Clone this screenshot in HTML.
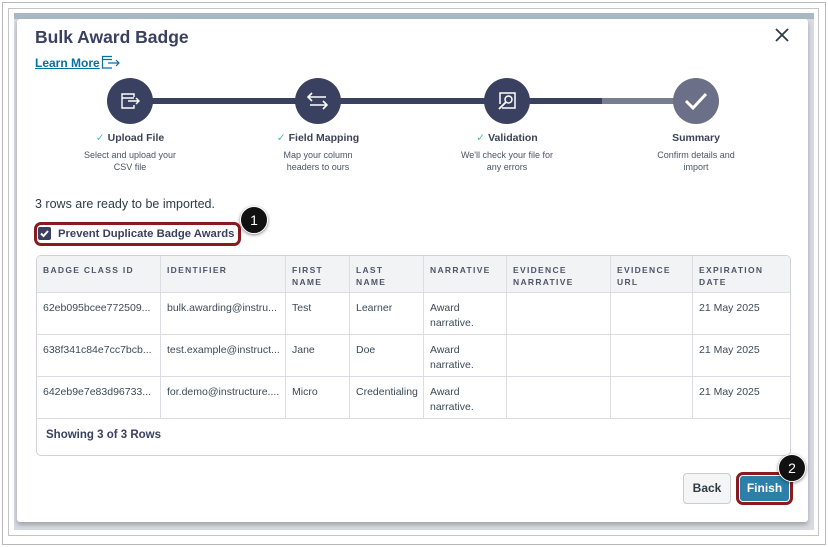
<!DOCTYPE html>
<html><head><style>
*{box-sizing:border-box;margin:0;padding:0}
body{width:828px;height:547px;background:#fff;font-family:"Liberation Sans",sans-serif;position:relative;overflow:hidden;color:#2d3b45}
.abs{position:absolute}
.f1{left:2px;top:2px;width:824px;height:543px;border:1px solid #b8b8b8}
.f2{left:8px;top:8px;width:811px;height:528px;border:1px solid #c4c4c4;background:#fff}
.bg{left:14px;top:13px;width:800px;height:517px;background:#d8dbe0}
.top{left:14px;top:13px;width:800px;height:6px;background:#a8b9c4}
.modal{left:17px;top:19px;width:791px;height:503px;background:#fff;border-radius:3px;box-shadow:0 3px 5px rgba(0,0,0,.25)}
.circ{width:46px;height:46px;border-radius:50%;background:#394060;top:78px}
.lbl{width:160px;text-align:center;font-size:10.5px;font-weight:bold;color:#3b4256;top:132px}
.desc{width:160px;text-align:center;font-size:9px;color:#4a5560;top:149px;line-height:12px}
.chk{color:#4bc0a8;font-weight:normal;margin-right:3px}
table{border-collapse:collapse;font-size:10.5px;color:#3b4a55;table-layout:fixed}
td,th{border:1px solid #dcdde2;vertical-align:top;text-align:left;padding:0 6px;overflow:hidden;white-space:nowrap}
th{background:#f2f3f5;height:37px;font-size:8.5px;letter-spacing:1.3px;color:#4d5666;padding-top:8px;line-height:12px}
td{height:42px;padding-top:8px;line-height:15px}
.badge{width:28px;height:28px;border-radius:50%;background:#111;color:#fff;font-size:14px;text-align:center;line-height:27px;box-shadow:0 1px 3px rgba(0,0,0,.5);border:1px solid #fff}
</style></head><body>
<div class="abs f1"></div>
<div class="abs f2"></div>
<div class="abs bg"></div>
<div class="abs top"></div>
<div class="abs modal"></div>
<div class="abs" style="left:35px;top:27px;font-size:17.5px;font-weight:bold;color:#394060">Bulk Award Badge</div>
<svg class="abs" style="left:774px;top:27px" width="16" height="16"><path d="M2 2L14 14M14 2L2 14" stroke="#2d3b45" stroke-width="1.8"/></svg>
<div class="abs" style="left:35px;top:56px;font-size:12px;font-weight:bold;color:#0770a3;text-decoration:underline">Learn More</div>
<svg class="abs" style="left:101px;top:55px" width="20" height="15"><path d="M11 1.5H1.5V13H11M1.5 4.5H11M7 8H18M15 5L18 8L15 11" stroke="#0770a3" fill="none" stroke-width="1.2"/></svg>
<div class="abs" style="left:130px;top:98px;width:472px;height:6px;background:#394060"></div>
<div class="abs" style="left:602px;top:98px;width:94px;height:6px;background:#7a7d90"></div>
<div class="abs circ" style="left:107px"><svg width="46" height="46"><path d="M27 19V16H15V30H27V27M15 20H27M21 23H32M29 20L32 23L29 26" stroke="#fff" fill="none" stroke-width="1.4"/></svg></div>
<div class="abs circ" style="left:295px"><svg width="46" height="46"><path d="M14 19H31M17 15L13 19L17 23M15 27H32M28 23L32 27L28 31" stroke="#fff" fill="none" stroke-width="1.6"/></svg></div>
<div class="abs circ" style="left:484px"><svg width="46" height="46"><path d="M18 30H31V15H16V26" stroke="#fff" fill="none" stroke-width="1.5"/><circle cx="24.5" cy="21.5" r="3.5" stroke="#fff" fill="none" stroke-width="1.5"/><path d="M22 24L15 31" stroke="#fff" stroke-width="1.8"/></svg></div>
<div class="abs circ" style="left:673px;background:#6b6f87"><svg width="46" height="46"><path d="M13 23L20 30L33 16" stroke="#fff" fill="none" stroke-width="3"/></svg></div>
<div class="abs lbl" style="left:50px"><span class="chk">✓</span>Upload File</div>
<div class="abs desc" style="left:50px">Select and upload your<br>CSV file</div>
<div class="abs lbl" style="left:238px"><span class="chk">✓</span>Field Mapping</div>
<div class="abs desc" style="left:238px">Map your column<br>headers to ours</div>
<div class="abs lbl" style="left:427px"><span class="chk">✓</span>Validation</div>
<div class="abs desc" style="left:427px">We'll check your file for<br>any errors</div>
<div class="abs lbl" style="left:616px">Summary</div>
<div class="abs desc" style="left:616px">Confirm details and<br>import</div>
<div class="abs" style="left:35px;top:197px;font-size:12.5px;color:#2d3b45">3 rows are ready to be imported.</div>
<div class="abs" style="left:34px;top:222px;width:207px;height:24px;border:3px solid #8b1a1f;border-radius:7px"></div>
<div class="abs" style="left:38px;top:227px;width:13px;height:13px;background:#394060;border-radius:2px"><svg width="13" height="13"><path d="M3 6.5L5.5 9L10 4" stroke="#fff" stroke-width="2" fill="none"/></svg></div>
<div class="abs" style="left:58px;top:228px;font-size:11.3px;font-weight:bold;color:#394060">Prevent Duplicate Badge Awards</div>
<div class="abs badge" style="left:240px;top:206px">1</div>
<div class="abs" style="left:36px;top:255px;width:755px;height:201px;border:1px solid #d0d2d8;border-radius:5px;overflow:hidden">
<table style="width:755px;margin:-1px">
<colgroup><col style="width:124px"><col style="width:125px"><col style="width:64px"><col style="width:74px"><col style="width:83px"><col style="width:104px"><col style="width:82px"><col style="width:99px"></colgroup>
<tr><th>BADGE CLASS ID</th><th>IDENTIFIER</th><th>FIRST<br>NAME</th><th>LAST<br>NAME</th><th>NARRATIVE</th><th>EVIDENCE<br>NARRATIVE</th><th>EVIDENCE<br>URL</th><th>EXPIRATION<br>DATE</th></tr>
<tr><td>62eb095bcee772509...</td><td>bulk.awarding@instru...</td><td>Test</td><td>Learner</td><td>Award<br>narrative.</td><td></td><td></td><td>21 May 2025</td></tr>
<tr><td>638f341c84e7cc7bcb...</td><td>test.example@instruct...</td><td>Jane</td><td>Doe</td><td>Award<br>narrative.</td><td></td><td></td><td>21 May 2025</td></tr>
<tr><td>642eb9e7e83d96733...</td><td>for.demo@instructure....</td><td>Micro</td><td>Credentialing</td><td>Award<br>narrative.</td><td></td><td></td><td>21 May 2025</td></tr>
</table>
<div style="padding:11px 9px;font-size:11.5px;font-weight:bold;color:#394060">Showing 3 of 3 Rows</div>
</div>
<div class="abs" style="left:683px;top:473px;width:48px;height:31px;background:#f5f5f5;border:1px solid #c7cdd1;border-radius:4px;font-size:12px;font-weight:bold;color:#2d3b45;text-align:center;line-height:29px">Back</div>
<div class="abs" style="left:736px;top:472px;width:57px;height:33px;border:3px solid #8b1a1f;border-radius:7px;padding:1px"><div style="background:#2b7fa8;height:100%;border-radius:3px;color:#fff;font-size:12px;font-weight:bold;text-align:center;line-height:25px">Finish</div></div>
<div class="abs badge" style="left:778px;top:454px">2</div>
</body></html>
